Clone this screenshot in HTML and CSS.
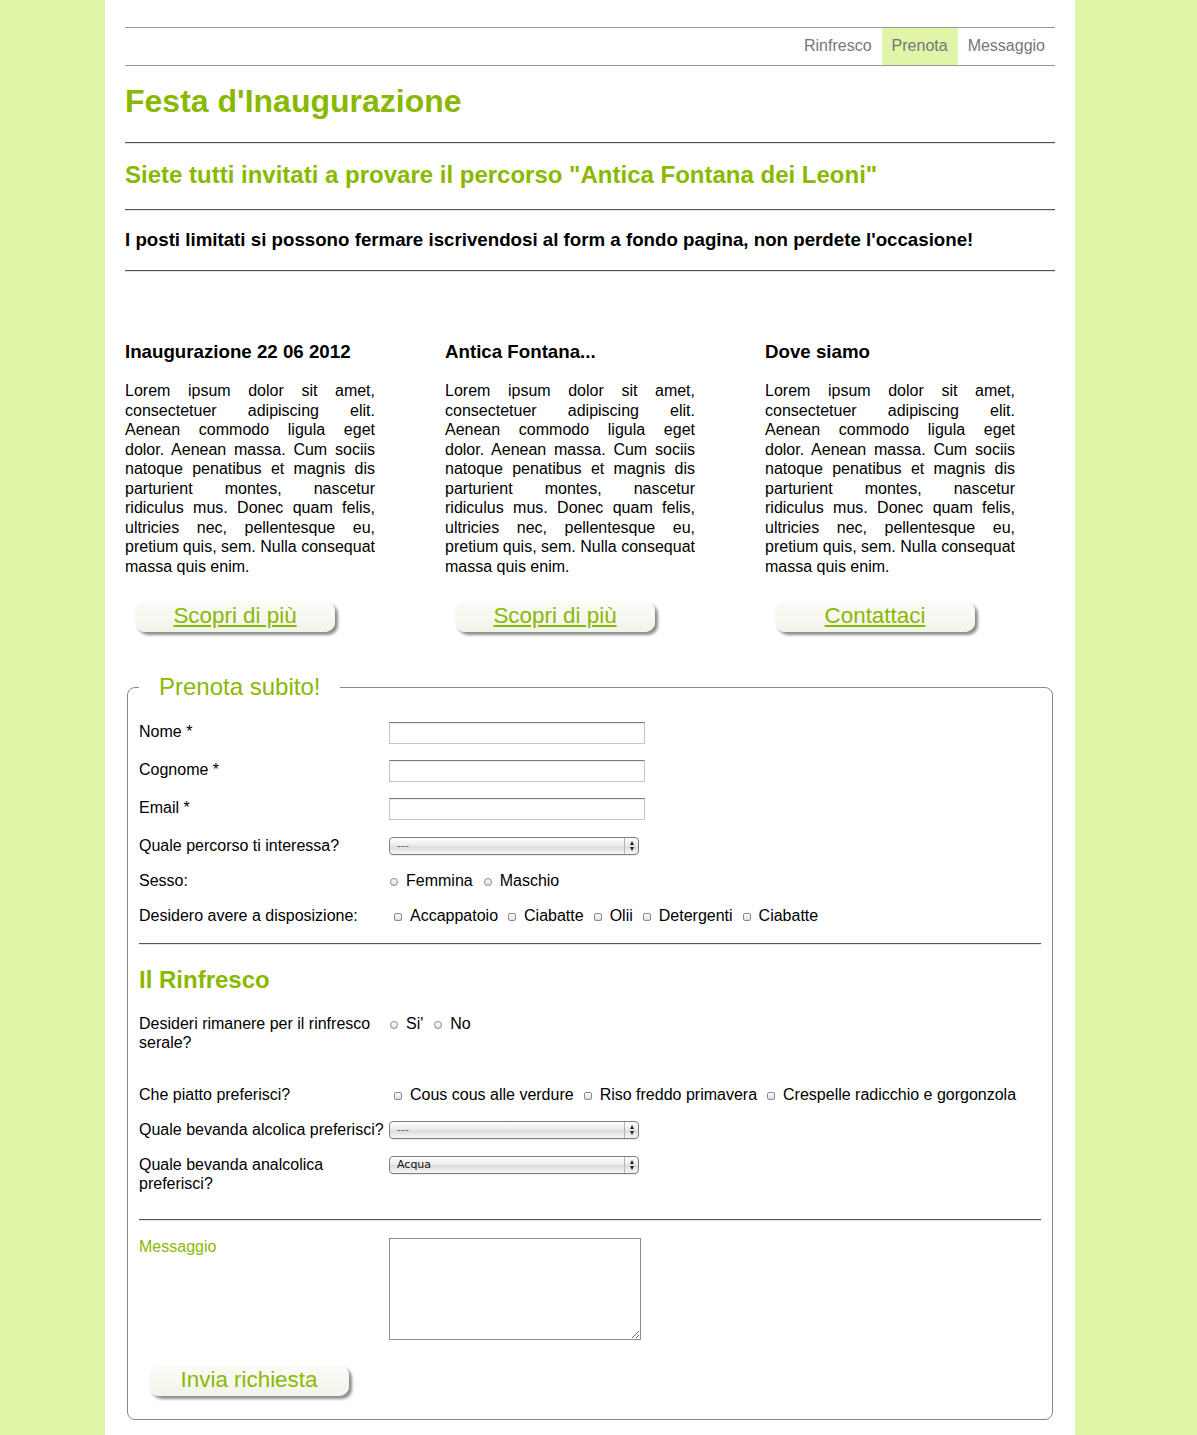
FILE: index.html
```html
<!DOCTYPE html>
<html lang="it">
<head>
<meta charset="utf-8">
<title>Festa d'Inaugurazione</title>
<link rel="stylesheet" href="styles.css">
</head>
<body>
<div class="page">
  <nav class="nav">
    <a href="#rinfresco" class="nav-item">Rinfresco</a>
    <a href="#prenota" class="nav-item active">Prenota</a>
    <a href="#messaggio" class="nav-item">Messaggio</a>
  </nav>

  <h1 class="title">Festa d'Inaugurazione</h1>
  <hr class="rule">
  <h2 class="subtitle">Siete tutti invitati a provare il percorso "Antica Fontana dei Leoni"</h2>
  <hr class="rule">
  <p class="lead">I posti limitati si possono fermare iscrivendosi al form a fondo pagina, non perdete l'occasione!</p>
  <hr class="rule">

  <div class="cols">
    <div class="col">
      <h3 class="col-title">Inaugurazione 22 06 2012</h3>
      <p class="col-text">Lorem ipsum dolor sit amet, consectetuer adipiscing elit. Aenean commodo ligula eget dolor. Aenean massa. Cum sociis natoque penatibus et magnis dis parturient montes, nascetur ridiculus mus. Donec quam felis, ultricies nec, pellentesque eu, pretium quis, sem. Nulla consequat massa quis enim.</p>
      <div class="btn"><a href="#" class="btn-link">Scopri di più</a></div>
    </div>
    <div class="col">
      <h3 class="col-title">Antica Fontana...</h3>
      <p class="col-text">Lorem ipsum dolor sit amet, consectetuer adipiscing elit. Aenean commodo ligula eget dolor. Aenean massa. Cum sociis natoque penatibus et magnis dis parturient montes, nascetur ridiculus mus. Donec quam felis, ultricies nec, pellentesque eu, pretium quis, sem. Nulla consequat massa quis enim.</p>
      <div class="btn"><a href="#" class="btn-link">Scopri di più</a></div>
    </div>
    <div class="col">
      <h3 class="col-title">Dove siamo</h3>
      <p class="col-text">Lorem ipsum dolor sit amet, consectetuer adipiscing elit. Aenean commodo ligula eget dolor. Aenean massa. Cum sociis natoque penatibus et magnis dis parturient montes, nascetur ridiculus mus. Donec quam felis, ultricies nec, pellentesque eu, pretium quis, sem. Nulla consequat massa quis enim.</p>
      <div class="btn"><a href="#" class="btn-link">Contattaci</a></div>
    </div>
  </div>

  <form class="booking" action="#">
    <fieldset class="box" id="prenota">
      <legend class="legend">Prenota subito!</legend>

      <div class="row">
        <label class="lbl" for="nome">Nome *</label>
        <input class="txt" type="text" id="nome">
      </div>
      <div class="row">
        <label class="lbl" for="cognome">Cognome *</label>
        <input class="txt" type="text" id="cognome">
      </div>
      <div class="row">
        <label class="lbl" for="email">Email *</label>
        <input class="txt" type="text" id="email">
      </div>
      <div class="row">
        <label class="lbl" for="percorso">Quale percorso ti interessa?</label>
        <span class="sel"><select id="percorso" class="sel-input dim"><option>---</option></select><span class="sel-arrows"><span class="up"></span><span class="down"></span></span></span>
      </div>
      <div class="row">
        <span class="lbl">Sesso:</span>
        <span class="opts">
          <label class="opt opt-r"><input type="radio" name="sesso" class="rd">Femmina</label>
          <label class="opt opt-r"><input type="radio" name="sesso" class="rd">Maschio</label>
        </span>
      </div>
      <div class="row">
        <span class="lbl">Desidero avere a disposizione:</span>
        <span class="opts">
          <label class="opt opt-c"><input type="checkbox" class="ck">Accappatoio</label>
          <label class="opt opt-c"><input type="checkbox" class="ck">Ciabatte</label>
          <label class="opt opt-c"><input type="checkbox" class="ck">Olii</label>
          <label class="opt opt-c"><input type="checkbox" class="ck">Detergenti</label>
          <label class="opt opt-c"><input type="checkbox" class="ck">Ciabatte</label>
        </span>
      </div>

      <hr class="rule inner-rule-1">
      <h2 class="section-title" id="rinfresco">Il Rinfresco</h2>

      <div class="row row-gap">
        <span class="lbl">Desideri rimanere per il rinfresco serale?</span>
        <span class="opts">
          <label class="opt opt-r"><input type="radio" name="rinfresco" class="rd">Si'</label>
          <label class="opt opt-r"><input type="radio" name="rinfresco" class="rd">No</label>
        </span>
      </div>
      <div class="row">
        <span class="lbl">Che piatto preferisci?</span>
        <span class="opts">
          <label class="opt opt-c"><input type="checkbox" class="ck">Cous cous alle verdure</label>
          <label class="opt opt-c"><input type="checkbox" class="ck">Riso freddo primavera</label>
          <label class="opt opt-c"><input type="checkbox" class="ck">Crespelle radicchio e gorgonzola</label>
        </span>
      </div>
      <div class="row">
        <label class="lbl" for="alcolica">Quale bevanda alcolica preferisci?</label>
        <span class="sel"><select id="alcolica" class="sel-input dim"><option>---</option></select><span class="sel-arrows"><span class="up"></span><span class="down"></span></span></span>
      </div>
      <div class="row">
        <label class="lbl" for="analcolica">Quale bevanda analcolica preferisci?</label>
        <span class="sel"><select id="analcolica" class="sel-input"><option>Acqua</option></select><span class="sel-arrows"><span class="up"></span><span class="down"></span></span></span>
      </div>

      <hr class="rule inner-rule-2">

      <div class="row" id="messaggio">
        <label class="lbl lbl-green" for="msg">Messaggio</label>
        <textarea id="msg" class="area"></textarea>
      </div>

      <div class="btn btn-send"><span class="btn-label">Invia richiesta</span></div>
    </fieldset>
  </form>
</div>
</body>
</html>
```

FILE: styles.css
```css
html, body {
  margin: 0;
  padding: 0;
}

body {
  background: #e0f5a8;
  font-family: "Liberation Sans", Arial, Helvetica, sans-serif;
  font-size: 16px;
  color: #000;
}

.page {
  width: 930px;
  margin-left: 105px;
  padding: 27px 20px 20px;
  background: #fff;
}

/* navigation */
.nav {
  display: flex;
  justify-content: flex-end;
  border-top: 1px solid #999;
  border-bottom: 1px solid #999;
  height: 37px;
}

.nav-item {
  display: block;
  padding: 0 10px 2px;
  line-height: 35px;
  color: #777;
  text-decoration: none;
  font-size: 16px;
}

.nav-item.active {
  background: #e0f5a8;
}

/* header */
.title {
  margin: 17px 0 22px;
  font-size: 32px;
  line-height: 37px;
  font-weight: bold;
  color: #8ab800;
}

.rule {
  height: 0;
  margin: 0;
  border: 0;
  border-top: 1px solid #555;
  border-bottom: 1px solid #e2e2e2;
}

.subtitle {
  margin: 17px 0 20px;
  font-size: 24px;
  line-height: 28px;
  font-weight: bold;
  color: #8ab800;
}

.lead {
  margin: 18px 0 19px;
  font-size: 18.72px;
  line-height: 22px;
  font-weight: bold;
}

/* columns */
.cols {
  display: grid;
  grid-template-columns: repeat(3, 250px);
  column-gap: 70px;
  margin-top: 69px;
}

.col-title {
  margin: 0;
  font-size: 18.72px;
  line-height: 22px;
  font-weight: bold;
}

.col-text {
  margin: 18px 0 0;
  font-size: 16px;
  line-height: 19.5px;
  text-align: justify;
}

.btn {
  width: 200px;
  height: 31px;
  margin: 25px 0 0 10px;
  border-radius: 10px;
  background: linear-gradient(#fbfcf8, #f1f4ea);
  box-shadow: 3px 3px 3px rgba(0, 0, 0, 0.45);
  text-align: center;
  line-height: 29px;
  font-size: 22.4px;
}

.btn-link {
  color: #8ab800;
  text-decoration: underline;
}

.btn-label {
  color: #8ab800;
}

/* form */
.booking {
  margin: 41px 0 0;
}

.box {
  margin: 0 2px;
  padding: 21px 11px 23px;
  border: 1px solid #888;
  border-radius: 8px;
  min-width: 0;
}

.legend {
  padding: 0 20px;
  margin: 0;
  font-size: 24px;
  line-height: 28px;
  color: #8ab800;
}

.row {
  display: flex;
  align-items: flex-start;
  margin-bottom: 16px;
}

.row-gap {
  margin-bottom: 33px;
}

.lbl {
  flex: none;
  width: 250px;
  font-size: 16px;
  line-height: 19px;
}

.lbl-green {
  color: #8ab800;
}

.txt {
  box-sizing: border-box;
  width: 256px;
  height: 22px;
  margin: 0;
  padding: 1px 3px;
  border: 1px solid #c4c4c4;
  border-top-color: #7c7c7c;
  box-shadow: inset 0 1px 1px rgba(0, 0, 0, 0.08);
  font: 13px "Liberation Sans", Arial, sans-serif;
  background: #fff;
}

.sel {
  position: relative;
  display: block;
  width: 250px;
  height: 18px;
  margin-top: 1px;
}

.sel-input {
  -webkit-appearance: none;
  appearance: none;
  box-sizing: border-box;
  display: block;
  width: 250px;
  height: 18px;
  margin: 0;
  padding: 0 0 0 7px;
  border: 1px solid #7f7f7f;
  border-radius: 4px;
  background: linear-gradient(#fdfdfd 0%, #ededed 45%, #dcdcdc 55%, #f6f6f6 100%);
  box-shadow: 0 1px 0 rgba(0, 0, 0, 0.08);
  font: 11px "DejaVu Sans", "Liberation Sans", sans-serif;
  line-height: 16px;
  color: #111;
}

.sel-input.dim {
  color: #666;
}

.sel-arrows {
  position: absolute;
  top: 1px;
  right: 1px;
  bottom: 1px;
  width: 13px;
  border-left: 1px solid #b4b4b4;
  display: flex;
  flex-direction: column;
  align-items: center;
  justify-content: center;
  gap: 2px;
  pointer-events: none;
}

.sel-arrows .up {
  width: 0;
  height: 0;
  border-left: 2.5px solid transparent;
  border-right: 2.5px solid transparent;
  border-bottom: 4px solid #222;
}

.sel-arrows .down {
  width: 0;
  height: 0;
  border-left: 2.5px solid transparent;
  border-right: 2.5px solid transparent;
  border-top: 4px solid #222;
}

.opts {
  display: flex;
  align-items: center;
  height: 19px;
  line-height: 19px;
  font-size: 16px;
  white-space: nowrap;
}

.opt {
  display: inline-flex;
  align-items: center;
}

.opt-r {
  margin-right: 10px;
}

.opt-c {
  margin-right: 5px;
}

.rd,
.ck {
  -webkit-appearance: none;
  appearance: none;
  box-sizing: border-box;
  width: 8px;
  height: 8px;
  border: 1px solid #8a8a8a;
  background: linear-gradient(#ffffff, #dedede);
  flex: none;
  position: relative;
  top: 1px;
}

.rd {
  margin: 0 8px 0 1px;
  border-radius: 50%;
}

.ck {
  margin: 0 8px 0 5px;
  border-radius: 2px;
}

.inner-rule-1 {
  margin: 18px 0 0;
}

.section-title {
  margin: 21px 0 20px;
  font-size: 24px;
  line-height: 28px;
  font-weight: bold;
  color: #8ab800;
}

.inner-rule-2 {
  margin: 26px 0 16px;
}

.area {
  box-sizing: border-box;
  width: 252px;
  height: 102px;
  margin: 1px 0 0;
  border: 1px solid #8c8c8c;
  font: 13px "Liberation Sans", Arial, sans-serif;
}

.btn-send {
  margin: 25px 0 0 10px;
}
```
